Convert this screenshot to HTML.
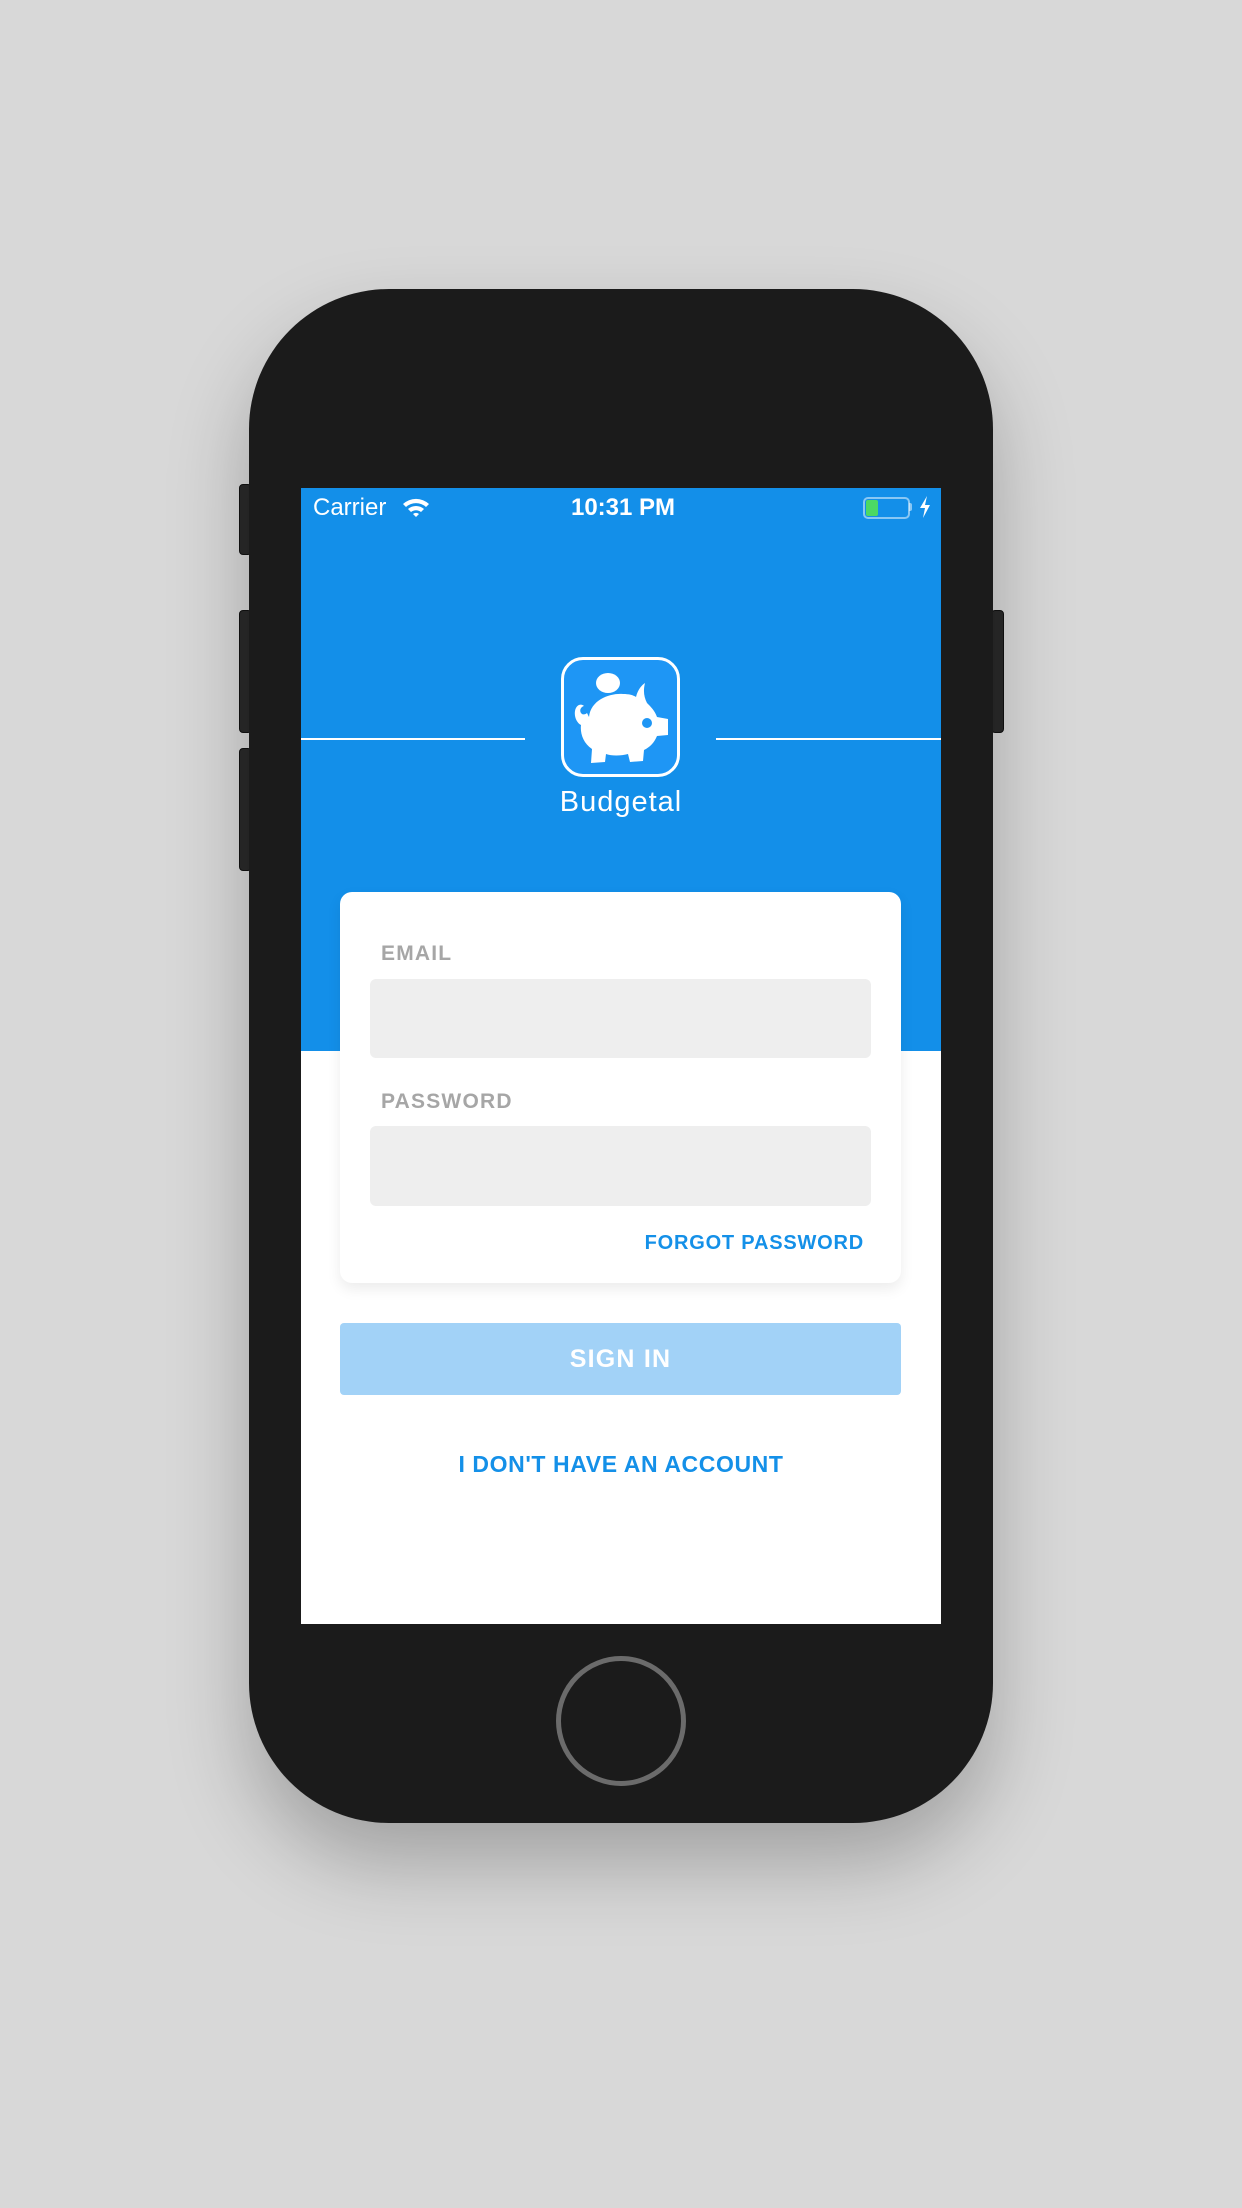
<!DOCTYPE html>
<html><head><meta charset="utf-8">
<style>
html,body{margin:0;padding:0}
body{width:1242px;height:2208px;background:#d8d8d8;position:relative;overflow:hidden;font-family:"Liberation Sans",sans-serif}
.phone{position:absolute;left:249px;top:289px;width:744px;height:1534px;background:#1b1b1b;border-radius:140px;box-shadow:0 40px 80px rgba(0,0,0,0.25)}
.btn{position:absolute;background:#2a2a2a;border:1px solid #111;border-radius:4px}
.screen{position:absolute;left:301px;top:488px;width:640px;height:1136px;background:#fff;overflow:hidden}
.blue{position:absolute;left:0;top:0;width:640px;height:563px;background:#138fe9}
.sb{position:absolute;top:6px;color:#fff;font-size:24px;line-height:28px}
.line{position:absolute;top:250px;height:2px;background:#fff}
.card{position:absolute;left:39px;top:404px;width:561px;height:391px;background:#fff;border-radius:12px;box-shadow:0 6px 14px rgba(0,0,0,0.08)}
.lbl{position:absolute;left:41px;font-weight:bold;font-size:21px;color:#a6a6a6;letter-spacing:1.2px}
.inp{position:absolute;left:30px;width:501px;background:#eeeeee;border-radius:6px}
.blu{color:#1490e8;font-weight:bold}
.home{position:absolute;left:556px;top:1656px;width:120px;height:120px;border:5px solid #6b6b6b;border-radius:50%}
</style></head><body>
<div class="btn" style="left:239px;top:484px;width:11px;height:69px"></div>
<div class="btn" style="left:239px;top:610px;width:11px;height:121px"></div>
<div class="btn" style="left:239px;top:748px;width:11px;height:121px"></div>
<div class="btn" style="left:991px;top:610px;width:11px;height:121px"></div>
<div class="phone"></div>
<div class="home"></div>
<div class="screen">
  <div class="blue"></div>
  <div class="sb" style="left:12px">Carrier</div>
  <svg style="position:absolute;left:100px;top:8px" width="30" height="22" viewBox="0 0 30 22">
    <path d="M2 8 A19 19 0 0 1 28 8 L25 11 A15 15 0 0 0 5 11Z" fill="#fff"/>
    <path d="M7 13 A12 12 0 0 1 23 13 L20 16 A8 8 0 0 0 10 16Z" fill="#fff"/>
    <path d="M12 18 A5 5 0 0 1 18 18 L15 21Z" fill="#fff"/>
  </svg>
  <div class="sb" style="left:2px;width:640px;text-align:center;font-weight:bold">10:31 PM</div>
  <div style="position:absolute;left:562px;top:9px;width:43px;height:18px;border:2px solid rgba(255,255,255,0.5);border-radius:5px"></div>
  <div style="position:absolute;left:565px;top:12px;width:12px;height:16px;background:#4cd964;border-radius:2px"></div>
  <div style="position:absolute;left:608px;top:15px;width:3px;height:8px;background:rgba(255,255,255,0.5);border-radius:0 2px 2px 0"></div>
  <svg style="position:absolute;left:618px;top:8px" width="12" height="22" viewBox="0 0 12 22"><path d="M8 0 L1 12 L6 12 L4 22 L11 9 L6 9 Z" fill="#fff"/></svg>
  <div class="line" style="left:0;width:224px"></div>
  <div class="line" style="left:415px;width:225px"></div>
  <div style="position:absolute;left:260px;top:169px;width:113px;height:114px;border:3px solid #fff;border-radius:22px;background:#1e96f5"></div>
  <svg style="position:absolute;left:260px;top:169px" width="119" height="120" viewBox="0 0 119 120">
    <ellipse cx="47" cy="26" rx="12" ry="10" fill="#fff"/>
    <path d="M28 60 C30 42 50 36 62 37 C68 37 72 38 75 40 C77 32 81 28 84 26 C82 34 83 40 86 46 C90 50 94 54 96 60 L107 62 L107 78 L96 79 C93 86 89 90 83 93 L82 104 L69 105 L67 97 C60 99 50 99 45 97 L44 105 L30 106 L31 92 C22 86 19 76 20 68 C16 66 13 60 14 54 C15 48 20 46 23 49 C19 50 18 55 21 57 C23 58 25 57 26 56 Z" fill="#fff"/>
    <ellipse cx="86" cy="66" rx="5" ry="5" fill="#1e96f5"/>
  </svg>
  <div style="position:absolute;left:0;width:640px;top:298px;text-align:center;color:#fff;font-size:29px;letter-spacing:1px;font-weight:300">Budgetal</div>
  <div class="card">
    <div class="lbl" style="top:50px">EMAIL</div>
    <div class="inp" style="top:87px;height:79px"></div>
    <div class="lbl" style="top:198px">PASSWORD</div>
    <div class="inp" style="top:234px;height:80px"></div>
    <div class="blu" style="position:absolute;right:37px;top:340px;font-size:20px;letter-spacing:0.8px">FORGOT PASSWORD</div>
  </div>
  <div style="position:absolute;left:39px;top:835px;width:561px;height:72px;background:#a2d2f7;border-radius:4px;color:#fff;font-weight:bold;font-size:25px;text-align:center;line-height:72px;letter-spacing:1.2px">SIGN IN</div>
  <div class="blu" style="position:absolute;left:0;width:640px;top:963px;text-align:center;font-size:23px;letter-spacing:0.6px">I DON'T HAVE AN ACCOUNT</div>
</div>
</body></html>
